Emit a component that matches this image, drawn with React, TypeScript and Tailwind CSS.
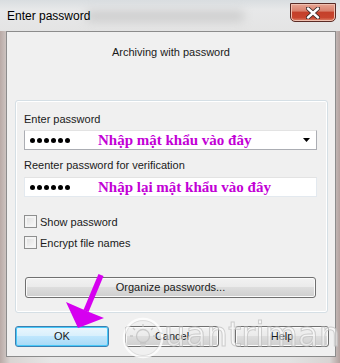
import React from "react";

function Dots() {
  return (
    <div className="flex items-center gap-[2px]">
      {[0, 1, 2, 3, 4, 5].map((i) => (
        <span key={i} className="block w-[5px] h-[5px] rounded-full bg-black" />
      ))}
    </div>
  );
}

function WinButton({ label, focused, className }: { label: string; focused?: boolean; className?: string }) {
  return (
    <div
      className={
        "relative flex items-center justify-center rounded-[3px] border text-[11px] text-[#1a1a1a] " +
        (focused
          ? "border-[#3c7fb1] bg-[linear-gradient(#eaf6fd_0%,#d9f0fc_45%,#bee6fd_50%,#a7d9f5_100%)] shadow-[inset_0_0_0_1px_#48c9f9] "
          : "border-[#707070] bg-[linear-gradient(#f2f2f2_0%,#ebebeb_45%,#dddddd_50%,#cfcfcf_100%)] shadow-[inset_0_0_0_1px_#fbfbfb] ") +
        (className ?? "")
      }
    >
      {label}
    </div>
  );
}

function Check({ label }: { label: string }) {
  return (
    <div className="flex items-center h-[13px]">
      <span className="block w-[13px] h-[13px] border border-[#8e8f8f] bg-[linear-gradient(135deg,#dcdcdc,#fbfbfb)] shadow-[inset_0_0_0_2px_#f4f4f4]" />
      <span className="ml-[3px] text-[11px] leading-[16px] text-[#1a1a1a]">{label}</span>
    </div>
  );
}

export default function App() {
  const font = "font-['Liberation_Sans','Noto_Sans',sans-serif]";
  return (
    <div
      className={
        "relative w-[340px] h-[363px] overflow-hidden flex flex-col bg-[linear-gradient(90deg,#b9aaa6_0%,#d9d4d2_3%,#e6e6e6_15%,#e2e2e2_85%,#d8d4d3_97%,#b3a29f_100%)] " +
        font
      }
    >
      {/* title bar */}
      <div className="relative h-[31px] flex items-start justify-between shrink-0 bg-[linear-gradient(#d9dde0_0%,#e7e8e9_30%,#e4e4e4_100%)]">
        <div className="absolute left-[85px] top-[10px] w-[160px] h-[12px] rounded-full bg-[#b8b8b8] opacity-50 blur-[5px]" />
        <span className="relative ml-[7px] mt-[8px] text-[12px] leading-[16px] text-black">Enter password</span>
        <div className="relative mt-[3px] mr-[4px] w-[46px] h-[19px] rounded-b-[5px] border border-[#5a2b25] bg-[linear-gradient(#e8a593_0%,#d9826e_40%,#c4402a_50%,#c8452e_80%,#e08a70_100%)] shadow-[inset_0_0_0_1px_#f0c0b0] flex items-center justify-center">
          <svg width="14" height="12" viewBox="0 0 14 12">
            <path d="M2 1.5 L12 10.5 M12 1.5 L2 10.5" stroke="#3a2a28" strokeWidth="4.2" strokeLinecap="round" />
            <path d="M2 1.5 L12 10.5 M12 1.5 L2 10.5" stroke="#ffffff" strokeWidth="2.4" strokeLinecap="round" />
          </svg>
        </div>
      </div>

      {/* client area */}
      <div className="relative ml-[6px] mr-[4px] h-[326px] border border-[#8c8c8c] bg-[#f0f0f0] flex flex-col">
        <div className="h-[16px] mt-[12px] text-center text-[11px] leading-[16px] text-[#1a1a1a]">Archiving with password</div>

        {/* group box */}
        <div className="ml-[8px] mt-[40px] w-[313px] h-[213px] rounded-[3px] border border-[#d5dfe5] shadow-[inset_0_0_0_1px_#ffffff] flex flex-col px-[8px]">
          <div className="mt-[10px] h-[16px] text-[11px] leading-[16px] text-[#1a1a1a]">Enter password</div>
          <div className="mt-[3px] w-[293px] h-[20px] border border-[#abadb3] border-t-[#e3e3e3] bg-white flex items-center pl-[5px] pr-[4px]">
            <Dots />
            <span className="ml-[28px] font-['Liberation_Serif','DejaVu_Serif',serif] font-bold text-[15px] leading-[18px] text-[#c200d6]">
              Nhập mật khẩu vào đây
            </span>
            <svg className="ml-auto mr-[1px]" width="8" height="4" viewBox="0 0 8 4">
              <path d="M0 0 H7 L3.5 4 Z" fill="#000" />
            </svg>
          </div>
          <div className="mt-[7px] h-[16px] text-[11px] leading-[16px] text-[#1a1a1a]">Reenter password for verification</div>
          <div className="mt-[4px] w-[293px] h-[20px] border border-[#e3e9ef] border-t-[#e3e3e3] bg-white flex items-center pl-[5px]">
            <Dots />
            <span className="ml-[28px] font-['Liberation_Serif','DejaVu_Serif',serif] font-bold text-[15px] leading-[18px] text-[#c200d6]">
              Nhập lại mật khẩu vào đây
            </span>
          </div>
          <div className="mt-[18px] flex flex-col gap-[8px]">
            <Check label="Show password" />
            <Check label="Encrypt file names" />
          </div>
          <WinButton label="Organize passwords..." className="mt-[28px] ml-[1px] w-[291px] h-[21px]" />
        </div>

        {/* bottom buttons */}
        <div className="ml-[8px] mt-[13px] flex gap-[16px]">
          <WinButton label="OK" focused className="w-[94px] h-[21px]" />
          <WinButton label="Cancel" className="w-[94px] h-[21px]" />
          <WinButton label="Help" className="w-[94px] h-[21px]" />
        </div>
      </div>

      {/* watermark */}
      <div className="pointer-events-none absolute left-[122px] top-[317px] flex items-start opacity-80">
        <svg width="42" height="42" viewBox="0 0 42 42">
          <circle cx="21" cy="21" r="19" fill="none" stroke="#ffffff" strokeWidth="2.5" />
          <circle cx="21" cy="21" r="17.5" fill="none" stroke="#d0d0d0" strokeWidth="0.8" />
          <circle cx="21" cy="19" r="6.5" fill="none" stroke="#c0c0c0" strokeWidth="1.3" />
          <path d="M18 26 h6 M18.5 29 h5" stroke="#c0c0c0" strokeWidth="1.3" />
          <path d="M21 7 v3 M11 11 l2 2 M31 11 l-2 2 M8 19 h3 M31 19 h3" stroke="#c0c0c0" strokeWidth="1.3" />
        </svg>
        <span className="font-['DejaVu_Sans',sans-serif] text-[34px] leading-[34px] text-white/60 [-webkit-text-stroke:1px_#c4c4c4]">
          uantrimang
        </span>
      </div>

      {/* purple arrow */}
      <svg className="pointer-events-none absolute left-0 top-0" width="340" height="363" viewBox="0 0 340 363">
        <path d="M101 275 L86 311" stroke="#d600f0" strokeWidth="5.5" strokeLinecap="butt" />
        <path d="M66 302 L78 328 L104 318 L89 312 Z" fill="#d600f0" />
      </svg>
    </div>
  );
}
